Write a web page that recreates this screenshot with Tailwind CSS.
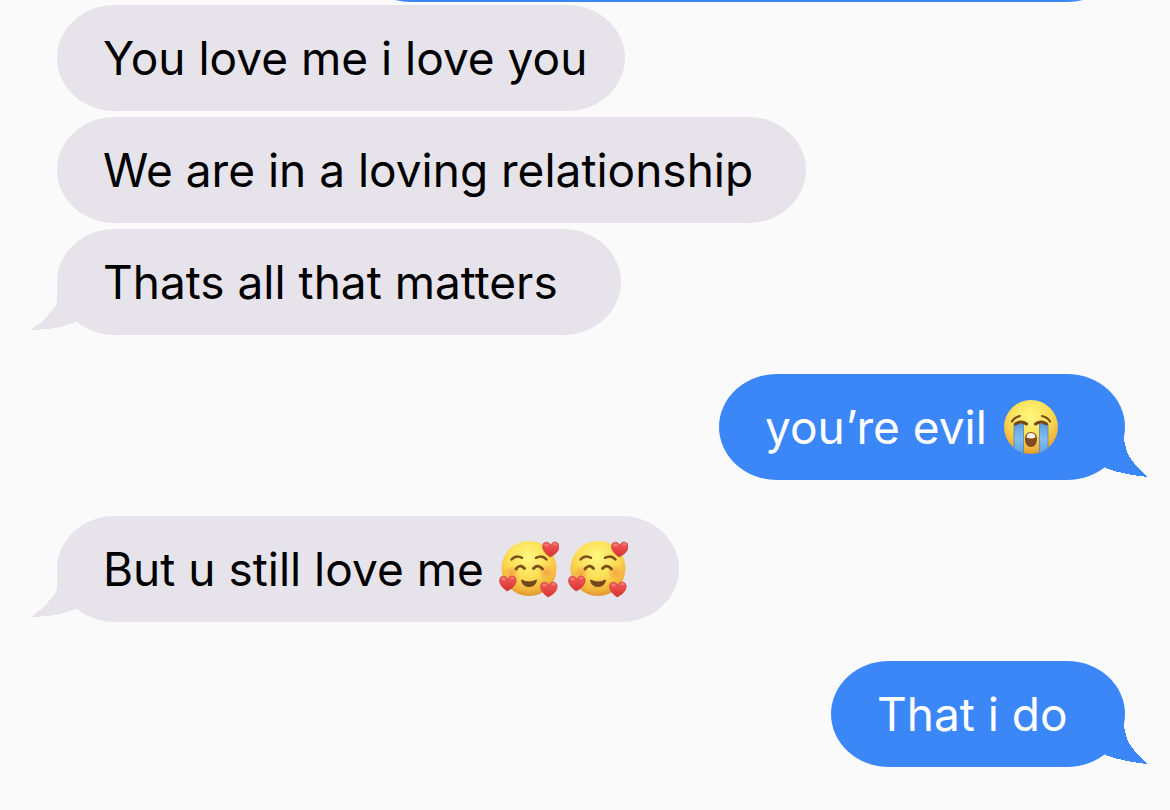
<!DOCTYPE html>
<html lang="en">
<head>
<meta charset="utf-8">
<meta name="viewport" content="width=device-width, initial-scale=1">
<title>Messages</title>
<script src="https://cdn.jsdelivr.net/npm/@tailwindcss/browser@4"></script>
</head>
<body class="min-h-screen overflow-hidden bg-[#fafafa] font-['Inter',sans-serif] text-[46px] leading-[58px] text-black">
<svg class="absolute size-0" aria-hidden="true">
  <defs>
    <radialGradient id="face" cx=".48" cy=".3" r=".74">
      <stop offset="0" stop-color="#fff780"/><stop offset=".5" stop-color="#fcde55"/><stop offset=".8" stop-color="#f2b53b"/><stop offset="1" stop-color="#d98a2b"/>
    </radialGradient>
    <radialGradient id="blush"><stop offset="0" stop-color="#f58a3c" stop-opacity=".65"/><stop offset="1" stop-color="#f58a3c" stop-opacity="0"/></radialGradient>
    <linearGradient id="tear" x2="0" y2="1"><stop offset="0" stop-color="#5f9fda"/><stop offset=".5" stop-color="#83bff0"/><stop offset="1" stop-color="#5b9fdd"/></linearGradient>
    <linearGradient id="heart" x2="0" y2="1"><stop offset="0" stop-color="#f3605c"/><stop offset="1" stop-color="#d8302f"/></linearGradient>
    <clipPath id="round"><circle cx="27" cy="27" r="27"/></clipPath>
    <symbol id="heart-shape" viewBox="0 0 18 17">
      <path d="M8 16C4 13 .5 9.500 .5 5.500C.5 2.500 2.500 1 4.800 1.200C6.800 1.400 8 2.700 8.700 4.300C9.700 2.200 11.500 .6 13.600 1C16.500 1.500 17.700 4 17 7C16 11 12.500 14 8 16Z" fill="url(#heart)" stroke="#c9393a" stroke-width=".6"/>
      <ellipse cx="4.500" cy="4" rx="2" ry="1.200" fill="#ff9a90" opacity=".65"/><ellipse cx="13.300" cy="3.300" rx="1.800" ry="1" fill="#ff9a90" opacity=".65"/>
    </symbol>
    <symbol id="love" viewBox="0 0 60 60">
      <circle cx="30" cy="29.500" r="27.500" fill="url(#face)"/>
      <circle cx="13" cy="34" r="8" fill="url(#blush)"/><circle cx="47" cy="33" r="8" fill="url(#blush)"/>
      <g fill="none" stroke="#80501a" stroke-linecap="round">
        <path d="M12.500 20.500Q17 15.500 23 18.800M37 18.800Q43 15.500 47.500 20.500" stroke-width="2.500"/>
        <path d="M17 30Q21 24.500 25.500 29.500M34.500 29.500Q39 24.500 43.500 30" stroke-width="3"/>
      </g>
      <path d="M22.500 41Q30 45 37.500 41Q36.500 47.500 30 47.500Q23.500 47.500 22.500 41Z" fill="#74471b" stroke="#74471b" stroke-linejoin="round"/>
      <use href="#heart-shape" x="43" y="2" width="18" height="17"/>
      <use href="#heart-shape" x="0" y="36" width="18" height="17"/>
      <use href="#heart-shape" x="41" y="42" width="18" height="17"/>
    </symbol>
    <symbol id="cry" viewBox="0 0 54 54">
      <circle cx="27" cy="27" r="27" fill="url(#face)"/>
      <g clip-path="url(#round)">
        <path d="M10 24H19.500V54H10ZM35.500 24H44V54H35.500Z" fill="url(#tear)" stroke="#4f87bc" stroke-width=".8"/>
      </g>
      <g fill="none" stroke="#74451c" stroke-linecap="round">
        <path d="M8 21.500Q10 17.500 16 16M38 16Q44 17.500 46 21.500" stroke-width="2"/>
        <path d="M11.500 24Q17 20 22.500 24M31.500 24Q37 20 42.500 24" stroke-width="3"/>
      </g>
      <path d="M27 32C31 32 33 35 33 38.500C33 43 31 47 27 47C23 47 21 43 21 38.500C21 35 23 32 27 32Z" fill="#7e4b22"/>
      <path d="M27 33C30 33 31.500 35 31.500 37.500Q27 39.500 22.500 37.500C22.500 35 24 33 27 33Z" fill="#fff5e9"/>
    </symbol>
    <symbol id="tail-in" viewBox="0 0 53 52">
      <path d="M26 8L26 19Q25 24 17 32Q10 40 0 47L9 46.500Q25 45.500 33 43Q41 40 47 38L47 8Z" fill="#e6e3ea" shape-rendering="crispEdges"/>
    </symbol>
    <symbol id="tail-out" viewBox="0 0 53 52">
      <path d="M29 10Q30 20 34 28Q40 38 53 49Q30 47 10 40L8 10Z" fill="#3b87f7" shape-rendering="crispEdges"/>
    </symbol>
  </defs>
</svg>
<main>
  <ol class="flex flex-col items-start pr-[45px] pl-[57px]">
    <li class="-mt-[104px] mb-[3px] h-[106px] w-[772px] max-w-full self-end rounded-[58px/53px] bg-[#3b87f7]" aria-label="Earlier message"></li>
    <li class="mb-[6px] w-[568px] max-w-full rounded-[58px/53px] bg-[#e6e3ea] py-6 pl-[46px]"><p>You love me i love you</p></li>
    <li class="mb-[6px] w-[749px] max-w-full rounded-[58px/53px] bg-[#e6e3ea] py-6 pl-[46px]"><p>We are in a loving relationship</p></li>
    <li class="relative mb-[39px] w-[564px] max-w-full rounded-[58px/53px] bg-[#e6e3ea] py-6 pl-[46px]">
      <p>Thats all that matters</p>
      <svg class="absolute bottom-0 -left-[26px] h-[52px] w-[53px]" aria-hidden="true"><use href="#tail-in"/></svg>
    </li>
    <li class="relative mb-[36px] w-[406px] max-w-full self-end rounded-[58px/53px] bg-[#3b87f7] py-6 pl-[46px] text-white">
      <svg class="absolute -right-[23px] bottom-0 h-[52px] w-[53px]" aria-hidden="true"><use href="#tail-out"/></svg>
      <p class="relative flex items-center justify-between pr-[67px]">you’re evil <svg class="size-[54px]" role="img" aria-label="Loudly crying face"><use href="#cry"/></svg></p>
    </li>
    <li class="relative mb-[39px] w-[622px] max-w-full rounded-[58px/53px] bg-[#e6e3ea] py-6 pl-[46px]">
      <svg class="absolute bottom-0 -left-[26px] h-[52px] w-[53px]" aria-hidden="true"><use href="#tail-in"/></svg>
      <p class="relative flex h-[58px] items-center pr-[51px]"><span class="grow">But u still love me</span>
        <svg class="mr-[9px] size-[60px]" role="img" aria-label="Smiling face with hearts"><use href="#love"/></svg>
        <svg class="size-[60px]" role="img" aria-label="Smiling face with hearts"><use href="#love"/></svg></p>
    </li>
    <li class="relative w-[294px] max-w-full self-end rounded-[58px/53px] bg-[#3b87f7] py-6 pl-[46px] text-white">
      <p>That i do</p>
      <svg class="absolute -right-[23px] bottom-0 h-[52px] w-[53px]" aria-hidden="true"><use href="#tail-out"/></svg>
    </li>
  </ol>
</main>
</body>
</html>
